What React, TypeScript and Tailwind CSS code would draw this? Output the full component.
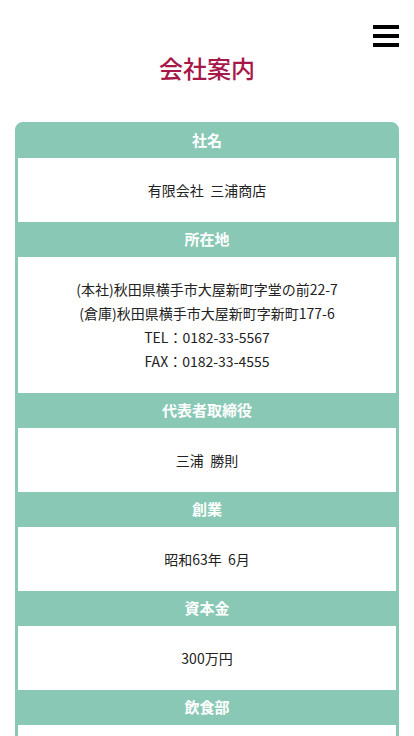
import React from "react";

const rows: { h: string; lines: string[] }[] = [
  { h: "社名", lines: ["有限会社\u00a0\u00a0三浦商店"] },
  {
    h: "所在地",
    lines: [
      "(本社)秋田県横手市大屋新町字堂の前22-7",
      "(倉庫)秋田県横手市大屋新町字新町177-6",
      "TEL：0182-33-5567",
      "FAX：0182-33-4555",
    ],
  },
  { h: "代表者取締役", lines: ["三浦\u00a0\u00a0勝則"] },
  { h: "創業", lines: ["昭和63年\u00a0\u00a06月"] },
  { h: "資本金", lines: ["300万円"] },
  { h: "飲食部", lines: ["\u00a0"] },
];

export default function App() {
  return (
    <div
      className="relative min-h-[736px] bg-white pt-[50px] pb-[40px]"
      style={{ fontFamily: '"Noto Sans CJK JP", "Noto Sans", sans-serif' }}
    >
      <button className="absolute top-[25px] right-[15px] flex flex-col gap-[5px]" aria-label="menu">
        <span className="block h-[4px] w-[26px] bg-black" />
        <span className="block h-[4px] w-[26px] bg-black" />
        <span className="block h-[4px] w-[26px] bg-black" />
      </button>
      <h1 className="text-center text-[24px] leading-[36px] font-medium text-[#a6174a]">会社案内</h1>
      <div className="mx-[15px] mt-[36px] overflow-hidden rounded-[8px] border-x-[3px] border-t-[1px] border-b-[3px] border-[#8ac8b6] bg-[#8ac8b6]">
        {rows.map((r) => (
          <div key={r.h}>
            <div className="flex h-[35px] items-center justify-center text-[15px] font-bold text-white">{r.h}</div>
            <div className="bg-white py-[20px] text-center text-[14px] leading-[24px] text-[#222]">
              {r.lines.map((l, i) => (
                <div key={i}>{l}</div>
              ))}
            </div>
          </div>
        ))}
      </div>
    </div>
  );
}
